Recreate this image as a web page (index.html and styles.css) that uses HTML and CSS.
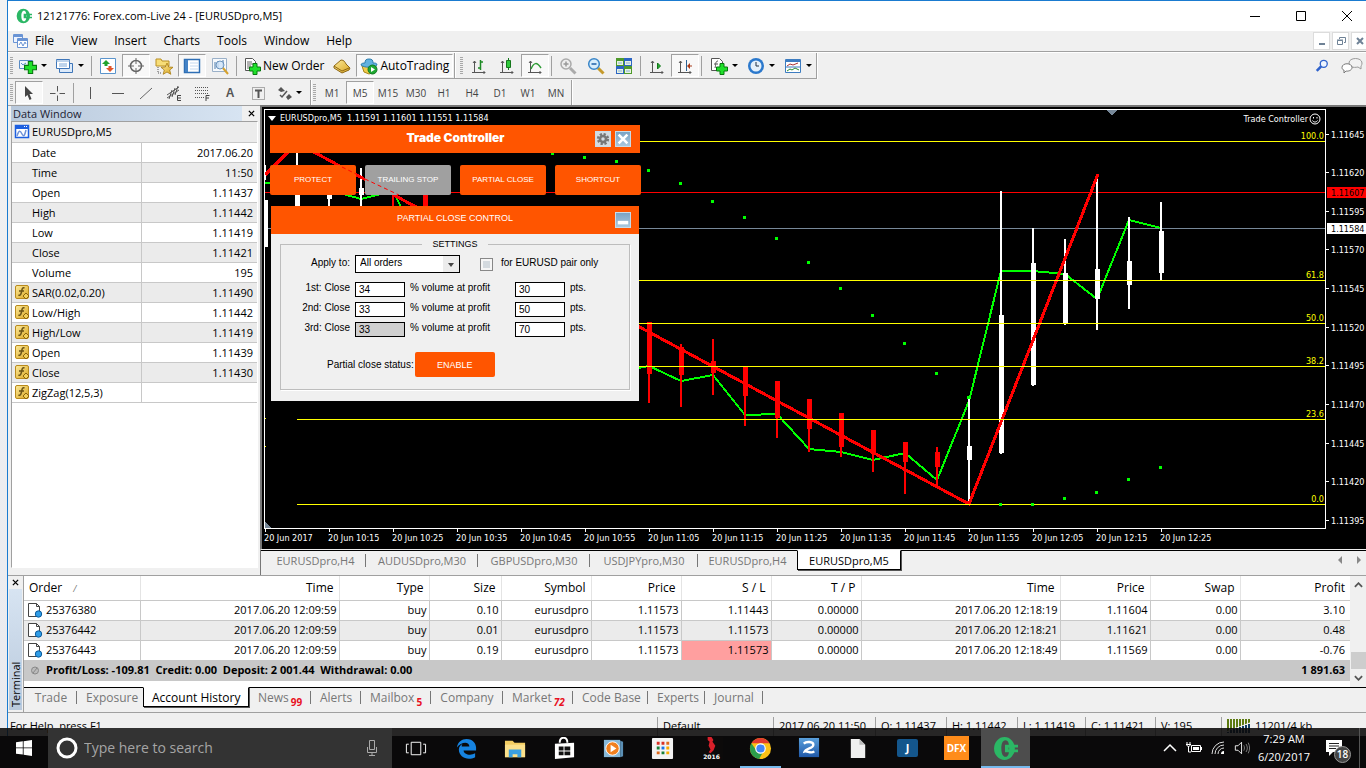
FILE: index.html
```html
<!DOCTYPE html>
<html lang="en">
<head>
<meta charset="utf-8">
<title>12121776: Forex.com-Live 24 - [EURUSDpro,M5]</title>
<link rel="stylesheet" href="styles.css">
</head>
<body>
<svg class="defs" aria-hidden="true">
  <defs>
    <linearGradient id="gold" x1="0" y1="0" x2="1" y2="1"><stop offset="0" stop-color="#fdeb9c"/><stop offset="1" stop-color="#d9a520"/></linearGradient>
    <linearGradient id="sky" x1="0" y1="0" x2="0" y2="1"><stop offset="0" stop-color="#5aa0dc"/><stop offset="1" stop-color="#1f58a8"/></linearGradient>
    <symbol id="plus" viewBox="0 0 12 12"><path d="M4 .5h4V4h3.500v4H8v3.500H4V8H.5V4H4z" fill="#1fe02a" stroke="#07780f"/></symbol>
    <symbol id="fx" viewBox="0 0 16 16"><rect x="1.500" y="1.500" width="13" height="13" rx="1.500" fill="url(#gold)" stroke="#b98a1c"/><path d="M10.500 4C8 3 8 6 7.500 8s-1 4-3 3M5 7h5" stroke="#6b5316" stroke-width="1.500" fill="none"/><path d="M12 9l3 3-3 3-3-3z" fill="#f3cf5b" stroke="#8a6510"/></symbol>
    <symbol id="order" viewBox="0 0 16 16"><path d="M1.500 1.500h8l3 3v10h-11z" fill="#fff" stroke="#444"/><path d="M9.500 1.500v3h3" fill="none" stroke="#444"/><circle cx="11.500" cy="12" r="3.200" fill="#2f9ce6" stroke="#0a5a9c"/></symbol>
    <symbol id="axes" viewBox="0 0 16 16"><path d="M3.500 2v12M1 13.500h13M2 4l1.500-2L5 4M12.500 12l1.500 1.500-1.500 1.500" fill="none" stroke="#555"/></symbol>
    <symbol id="logo" viewBox="0 0 24 24"><path fill-rule="evenodd" d="M11 1a10 11 0 0 1 0 22a10 11 0 0 1 0-22zM12 4c-3 0-4 4-4 8s1 8 4 8 3.500-4 3.500-8S15 4 12 4z" fill="#2bb765"/><path d="M11.500 8.500H24v2.500h-9v2h9v2.500H11.500z" fill="#2bb765"/></symbol>
  </defs>
</svg>

<main class="window">
  <header class="titlebar">
    <svg class="app-icon" viewBox="0 0 24 24"><use href="#logo"/></svg>
    <h1>12121776: Forex.com-Live 24 - [EURUSDpro,M5]</h1>
    <div class="win-controls">
      <button aria-label="Minimize"><svg viewBox="0 0 12 12"><path d="M1 6.500h10" stroke="#000"/></svg></button>
      <button aria-label="Maximize"><svg viewBox="0 0 12 12"><path d="M1.500 1.500h9v9h-9z" stroke="#000" fill="none"/></svg></button>
      <button aria-label="Close"><svg viewBox="0 0 12 12"><path d="M1 1l10 10M11 1L1 11" stroke="#000"/></svg></button>
    </div>
  </header>

  <nav class="menubar">
    <svg class="icon16" viewBox="0 0 16 16"><path d="M1.500 1.500h9v8h-9z" fill="#eef4ff" stroke="#6a94d4"/><path d="M5.500 5.500h10v9h-10z" fill="#fff" stroke="#6a94d4"/><path d="M5 7h11M1 3h10" stroke="#6a94d4" stroke-width="2"/><path d="M7 12l2-3 2 4 2-4 1 2" fill="none" stroke="#6a94d4"/></svg>
    <button>File</button><button>View</button><button>Insert</button><button>Charts</button><button>Tools</button><button>Window</button><button>Help</button>
    <div class="mdi">
      <button aria-label="Minimize chart"><svg viewBox="0 0 12 12"><path d="M3 9h6" stroke="#6f8296" stroke-width="2"/></svg></button>
      <button aria-label="Restore chart"><svg viewBox="0 0 12 12"><path d="M4.500 4V2.500h6v5H9M2.500 5.500h5v4h-5zM2 5h6" stroke="#6f8296" fill="none"/></svg></button>
      <button aria-label="Close chart"><svg viewBox="0 0 12 12"><path d="M3 3l6 6M9 3L3 9" stroke="#6f8296" stroke-width="2"/></svg></button>
    </div>
  </nav>

  <div class="toolrow">
    <div class="toolbar lined">
      <i class="grip"></i>
      <button class="tb drop" aria-label="New chart"><svg viewBox="0 0 20 18"><path d="M1.500 3.500h13v8h-13z" fill="#eef5fd" stroke="#5a8cc4"/><path d="M3 6l2 2 3-2" stroke="#5a8cc4" fill="none"/><use href="#plus" x="6" y="4" width="13" height="13"/></svg></button>
      <button class="tb drop" aria-label="Profiles"><svg viewBox="0 0 20 18"><path d="M4.500 6.500h13v9h-13z" fill="#dceafa" stroke="#3f76b8"/><path d="M1.500 2.500h13v9h-13z" fill="#fff" stroke="#3f76b8"/><path d="M1 4h14M4 7h8M4 9h8" stroke="#7fa9d8"/></svg></button>
      <i class="sep"></i>
      <button class="tb" aria-label="Market watch"><svg viewBox="0 0 18 18"><path d="M1.500 1.500h15v15h-15z" fill="#fff" stroke="#5a94cc"/><path d="M7 3l4 4H8.500v2h-3V7H3z" fill="#22a32b"/><path d="M11 15l4-4h-2.500V9h-3v2H7z" fill="#e2552a"/></svg></button>
      <button class="tb on" aria-label="Navigator"><svg viewBox="0 0 18 18"><circle cx="9" cy="9" r="5.500" fill="none" stroke="#666" stroke-width="1.500"/><path d="M9 1v6M9 11v6M1 9h6M11 9h6" stroke="#666"/></svg></button>
      <button class="tb" aria-label="Favorites"><svg viewBox="0 0 18 18"><path d="M1 2h5l1 2h7v5H1z" fill="#f7dd77" stroke="#b98f22"/><path d="M3 10v6h4" stroke="#555" stroke-dasharray="1 1" fill="none"/><path d="M12 6l1.700 4 4.300.3-3.300 2.700 1.100 4.300L12 15l-3.800 2.300L9.300 13 6 10.300l4.300-.3z" fill="url(#gold)" stroke="#a87c12" stroke-width=".8"/></svg></button>
      <button class="tb on" aria-label="Data window"><svg viewBox="0 0 18 18"><path d="M1.500 2.500h15v13h-15z" fill="#fff" stroke="#2f6fb5" stroke-width="1.500"/><path d="M2 3h3v12H2z" fill="#4583c6"/><path d="M7 6h8M7 9h8M7 12h8" stroke="#c4d9ef"/></svg></button>
      <button class="tb" aria-label="Strategy tester"><svg viewBox="0 0 18 18"><path d="M1.500 1.500h14v13h-14z" fill="#f6f9fc" stroke="#9ab0c8"/><path d="M4 5v7M7 4v7M12 3v8" stroke="#4f7dad"/><circle cx="9" cy="8" r="4" fill="#cfe4f8" fill-opacity=".8" stroke="#6b94bd"/><path d="M12 11l5 6" stroke="#d6a12c" stroke-width="2"/></svg></button>
      <i class="sep"></i>
      <button class="tb wide"><svg viewBox="0 0 18 18"><path d="M2.500 1.500h7l3 3v9h-10z" fill="#fff" stroke="#555"/><path d="M4 5h5M4 7h7M4 9h4M4 11h3" stroke="#666"/><use href="#plus" x="6" y="6" width="12" height="12"/></svg>New Order</button>
      <button class="tb" aria-label="MetaEditor"><svg viewBox="0 0 18 18"><path d="M1 9l7-6c3 0 4 2 5 4l4 4-1 2-7 3-8-5z" fill="url(#gold)" stroke="#8d6714"/><path d="M1 9l8 5 7-3" fill="none" stroke="#8d6714"/></svg></button>
      <button class="tb wide on"><svg viewBox="0 0 18 18"><path d="M2 9h14l-2 6-5 2-5-2z" fill="#f0cb4a" stroke="#a98518"/><path d="M1 8c0-2 3-2 4-2 0-3 1-4 4-4s4 1 4 4c2 0 4 0 4 2-3 3-13 3-16 0z" fill="#62b2e0" stroke="#2f7fae"/><circle cx="12.500" cy="12.500" r="4.500" fill="#1ea832" stroke="#0d7a1d"/><path d="M11 10l4 2.500-4 2.500z" fill="#fff"/></svg>AutoTrading</button>
    </div>
    <div class="toolbar lined charts">
      <i class="grip"></i>
      <button class="tb" aria-label="Bar chart"><svg viewBox="0 0 18 18"><use href="#axes" x="1" y="2" width="16" height="16"/><path d="M10.500 3v10M11 5h2M8 11h2" stroke="#1d8a24" stroke-width="1.500"/></svg></button>
      <button class="tb" aria-label="Candlesticks"><svg viewBox="0 0 18 18"><use href="#axes" x="1" y="2" width="16" height="16"/><path d="M10.500 1v12" stroke="#14761b"/><path d="M8.500 3.500h4v7h-4z" fill="#2fc93a" stroke="#14761b"/></svg></button>
      <button class="tb on" aria-label="Line chart"><svg viewBox="0 0 18 18"><use href="#axes" x="1" y="2" width="16" height="16"/><path d="M5 12c3-7 6-7 10-1" stroke="#2c9a33" stroke-width="1.500" fill="none"/></svg></button>
      <i class="sep"></i>
      <button class="tb" aria-label="Zoom in"><svg viewBox="0 0 18 18"><circle cx="7" cy="7" r="5" fill="#eee" stroke="#aaa" stroke-width="1.500"/><path d="M4.500 7h5M7 4.500v5" stroke="#999" stroke-width="1.500"/><path d="M11 11l5.500 5.500" stroke="#aaa" stroke-width="3"/></svg></button>
      <button class="tb" aria-label="Zoom out"><svg viewBox="0 0 18 18"><path d="M11 11l5.500 5.500" stroke="#c59a2c" stroke-width="3"/><circle cx="7" cy="7" r="5.300" fill="#d8edfc" stroke="#3a86c8" stroke-width="1.500"/><path d="M4.500 7h5" stroke="#1d5fa8" stroke-width="1.500"/></svg></button>
      <button class="tb" aria-label="Tile windows"><svg viewBox="0 0 18 18"><path d="M1 1h8v8H1zM9 9h8v8H9z" fill="#4e9a2b"/><path d="M9 1h8v8H9zM1 9h8v8H1z" fill="#2c65c4"/><path d="M2 4h6v4H2zM10 4h6v4h-6zM2 12h6v4H2zM10 12h6v4h-6z" fill="#e8f3e2"/><path d="M3 6h4M11 6h4M3 14h4M11 14h4" stroke="#8ab0d8"/></svg></button>
      <i class="sep"></i>
      <button class="tb" aria-label="Auto scroll"><svg viewBox="0 0 18 18"><use href="#axes" x="1" y="2" width="16" height="16"/><path d="M9.500 6l3 3-3 3z" fill="#27b032" stroke="#14761b"/></svg></button>
      <button class="tb on" aria-label="Chart shift"><svg viewBox="0 0 18 18"><use href="#axes" x="1" y="2" width="16" height="16"/><path d="M10.500 3v11" stroke="#2a6496"/><path d="M11 9l3-3v2.500h2v1h-2V12z" fill="#a83a1a"/></svg></button>
      <i class="sep"></i>
      <button class="tb drop" aria-label="Indicators"><svg viewBox="0 0 18 18"><path d="M1.500 1.500h8l3 3v9h-11z" fill="#fff" stroke="#555"/><path d="M8 4c-3 0-2 4-3 7M4 7h4" stroke="#555" fill="none"/><use href="#plus" x="6" y="6" width="12" height="12"/></svg></button>
      <button class="tb drop" aria-label="Periods"><svg viewBox="0 0 18 18"><circle cx="9" cy="9" r="8" fill="#2b78cc"/><circle cx="9" cy="9" r="5.500" fill="#e4f0fb"/><path d="M9 5v4h3" stroke="#234" fill="none"/></svg></button>
      <button class="tb drop" aria-label="Templates"><svg viewBox="0 0 18 18"><path d="M1.500 2.500h15v13h-15z" fill="#fff" stroke="#3d7cc0"/><path d="M1 3h16v2H1z" fill="#3d7cc0"/><path d="M3 9l3-2 3 1 5-2" stroke="#a33" fill="none"/><path d="M1 10h16" stroke="#3d7cc0"/><path d="M3 14l3-2 2 1 3-2 4 2" stroke="#2a8d32" fill="none"/></svg></button>
    </div>
    <div class="tool-end">
      <button class="tb" aria-label="Search"><svg viewBox="0 0 16 16"><circle cx="10" cy="5.500" r="4" fill="#eef5ff" stroke="#2f62cc" stroke-width="1.500"/><path d="M7 8.500l-5 5" stroke="#2f62cc" stroke-width="3"/></svg></button>
      <button class="tb" aria-label="Chat"><svg class="wide-icon" viewBox="0 0 22 16"><path d="M8 5c0-6 13-6 13 0 0 2-1 3-1 3v3l-3-2c-5 1-9 0-9-4z" fill="#f2f2f2" stroke="#999"/><path d="M1 9.500c0-5 10-5 10 0 0 3-4 4-6 3.500L3 15v-3c-1 0-2-1-2-2.500z" fill="#fff" stroke="#777"/></svg></button>
    </div>
  </div>

  <div class="toolrow second">
    <div class="toolbar">
      <i class="grip"></i>
      <button class="tb on" aria-label="Cursor"><svg viewBox="0 0 16 16"><path d="M4 1l8 8H8.500l2 5-2 1-2-5L4 12z" fill="#444"/></svg></button>
      <button class="tb" aria-label="Crosshair"><svg viewBox="0 0 16 16"><path d="M8.500 1v5.500M8.500 10.500V16M1 8.500h5.500M10.500 8.500H16" stroke="#555"/></svg></button>
      <i class="sep"></i>
      <button class="tb" aria-label="Vertical line"><svg viewBox="0 0 16 16"><path d="M8.500 2v12" stroke="#555"/></svg></button>
      <button class="tb" aria-label="Horizontal line"><svg viewBox="0 0 16 16"><path d="M2 8.500h12" stroke="#555"/></svg></button>
      <button class="tb" aria-label="Trendline"><svg viewBox="0 0 16 16"><path d="M2 14L14 3" stroke="#666"/></svg></button>
      <button class="tb" aria-label="Equidistant channel"><svg viewBox="0 0 16 16"><path d="M1 10l12-8M1 13l12-8M3 14l3-9M6 12l3-9M9 10l3-9" stroke="#555" fill="none"/><path d="M15 10.500h-3.500v5H15M12 13h3" stroke="#444" fill="none"/></svg></button>
      <button class="tb" aria-label="Fibonacci retracement"><svg viewBox="0 0 16 16"><path d="M1 2.500h14M1 5.500h14M1 8.500h14M1 12.500h9" stroke="#555" stroke-dasharray="1 1"/><path d="M15.500 10.500H12v5.500M12 13h3" stroke="#444" fill="none"/></svg></button>
      <button class="tb text-tool" aria-label="Text">A</button>
      <button class="tb" aria-label="Text label"><svg viewBox="0 0 16 16"><path d="M2.500 2.500h12v12h-12z" fill="none" stroke="#666" stroke-dasharray="1 1"/><path d="M5 5.500h7M8.500 5v8" stroke="#555" stroke-width="2"/></svg></button>
      <button class="tb drop narrow" aria-label="Arrows"><svg viewBox="0 0 16 16"><path d="M4 2l4 4-4 1-3-2zM12 9l3 3-4 3-2-3z" fill="#555"/><path d="M3 10l2 2 5-6" stroke="#555" fill="none" stroke-width="1.500"/></svg></button>
    </div>
    <div class="toolbar periods">
      <i class="grip"></i>
      <button class="tb">M1</button><button class="tb on">M5</button><button class="tb">M15</button><button class="tb">M30</button><button class="tb">H1</button><button class="tb">H4</button><button class="tb">D1</button><button class="tb">W1</button><button class="tb">MN</button>
    </div>
  </div>

  <div class="workspace">
    <aside class="data-window">
      <header><h2>Data Window</h2><button aria-label="Close data window"><svg viewBox="0 0 8 8"><path d="M1 1l6 6M7 1L1 7" stroke="#000" stroke-width="1.500"/></svg></button></header>
      <div class="data-list">
        <table>
          <colgroup><col><col class="c-value"></colgroup>
          <thead><tr><th colspan="2"><span><svg viewBox="0 0 16 16"><path d="M1.500 1.500h13v12h-13z" fill="#fff" stroke="#1d5fe0" stroke-width="1.500"/><path d="M1 1h14v4H1z" fill="#1d5fe0"/><path d="M10 2.500h4" stroke="#fff" stroke-dasharray="1 1"/><path d="M3 12c2-6 3-6 5-2s3 0 4-4" stroke="#6f92d8" fill="none" stroke-width="1.500"/></svg>EURUSDpro,M5</span></th></tr></thead>
          <tbody>
            <tr><td>Date</td><td>2017.06.20</td></tr>
            <tr><td>Time</td><td>11:50</td></tr>
            <tr><td>Open</td><td>1.11437</td></tr>
            <tr><td>High</td><td>1.11442</td></tr>
            <tr><td>Low</td><td>1.11419</td></tr>
            <tr><td>Close</td><td>1.11421</td></tr>
            <tr><td>Volume</td><td>195</td></tr>
            <tr><td class="ind"><span><svg><use href="#fx"/></svg>SAR(0.02,0.20)</span></td><td>1.11490</td></tr>
            <tr><td class="ind"><span><svg><use href="#fx"/></svg>Low/High</span></td><td>1.11442</td></tr>
            <tr><td class="ind"><span><svg><use href="#fx"/></svg>High/Low</span></td><td>1.11419</td></tr>
            <tr><td class="ind"><span><svg><use href="#fx"/></svg>Open</span></td><td>1.11439</td></tr>
            <tr><td class="ind"><span><svg><use href="#fx"/></svg>Close</span></td><td>1.11430</td></tr>
            <tr><td class="ind"><span><svg><use href="#fx"/></svg>ZigZag(12,5,3)</span></td><td></td></tr>
          </tbody>
        </table>
      </div>
    </aside>

    <section class="chart-area">
      <div class="chart">
        <div class="plot">
          <svg class="fill">
            <g transform="translate(-265,-110)" shape-rendering="crispEdges">
              <path d="M265 192.500H4000" stroke="#ff0000"/>
              <path d="M265 228.500H4000" stroke="#778899"/>
              <polyline fill="none" stroke="#00ff00" stroke-width="2" points="265,183 329,190 361,199 393,191 425,255 617,372 649,366 681,381 713,375 745,415 777,414 809,449 841,452 873,460 905,453 937,480 969,401 1001,271 1033,271 1065,274 1097,299 1129,220 1161,228"/>
              <path stroke="#ff0000" stroke-width="2" d="M393 193v25M425 180v60M649 322v81M681 344v63M713 339v56M745 367v59M777 381v57M809 399v53M841 413v44M873 430v42M905 442v52M937 447v39"/>
              <path stroke="#ff0000" stroke-width="5" d="M425.500 194v20M649.500 322v52M681.500 347v28M713.500 361v12M745.500 367v29M777.500 381v37M809.500 399v30M841.500 413v34M873.500 430v24M905.500 442v20M937.500 452v15"/>
              <path stroke="#ffffff" stroke-width="2" d="M265 165v15M297 152v60M329 194v12M361 168v38M969 398v105M1001 191v263M1033 228v158M1065 239v86M1097 179v151M1129 217v92M1161 202v78"/>
              <path stroke="#ffffff" stroke-width="5" d="M265.500 200v47M297.500 194v14M329.500 193v6M361.500 188v7M969.500 446v14M1001.500 315v138M1033.500 263v122M1065.500 273v51M1097.500 269v30M1129.500 261v24M1161.500 231v42"/>
              <polyline fill="none" stroke="#ff0000" stroke-width="3" points="265,175 297,143 969,504 1098,174"/>
              <path stroke="#ffff00" d="M297 141.500H4000M297 280.500H4000M297 323.500H4000M297 366.500H4000M297 419.500H4000M297 504.500H4000M264 418.500h2M264 446.500h2"/>
              <path stroke="#00ff00" stroke-width="3" d="M551 153.500h3M583 157.500h3M615 161.500h3M647 170.500h3M679 183.500h3M711 201.500h3M743 217.500h3M775 238.500h3M807 262.500h3M839 288.500h3M871 315.500h3M903 343.500h3M935 373.500h3M967 397.500h3M999 504.500h3M1031 504.500h3M1063 498.500h3M1095 492.500h3M1127 479.500h3M1159 467.500h3"/>
              <path d="M1106 110h11l-5 5z" fill="#778899"/>
              <path d="M265 522l6 6h-6z" fill="#778899"/>
            </g>
          </svg>
          <p class="symbol"><svg viewBox="0 0 8 5"><path d="M0 0h8L4 5z" fill="#fff"/></svg>EURUSDpro,M5&nbsp; 1.11591 1.11601 1.11551 1.11584</p>
          <p class="expert">Trade Controller<svg viewBox="0 0 12 12"><circle cx="6" cy="6" r="5" fill="none" stroke="#fff"/><path d="M4 4h1v1.500H4zM7.500 4h1v1.500h-1z" fill="#fff"/><path d="M3.500 7.500c1 2 4 2 5 0" stroke="#fff" fill="none"/></svg></p>
          <svg class="fill levels">
            <svg x="100%" overflow="visible"><g transform="translate(-1325,-110)" text-anchor="end" fill="#ffff00">
              <text x="1324" y="139">100.0</text><text x="1324" y="278">61.8</text><text x="1324" y="321">50.0</text><text x="1324" y="364">38.2</text><text x="1324" y="417">23.6</text><text x="1324" y="502">0.0</text>
            </g></svg>
          </svg>

          <section class="trade">
            <header class="trade-head"><h2>Trade Controller</h2>
              <button class="sq gear" aria-label="Settings"><svg viewBox="0 0 16 16"><circle cx="8" cy="8" r="5.500" fill="none" stroke="#777" stroke-width="3" stroke-dasharray="2.500 1.820"/><circle cx="8" cy="8" r="3.500" fill="none" stroke="#777" stroke-width="3"/></svg></button>
              <button class="sq" aria-label="Close panel"><svg viewBox="0 0 16 16"><path d="M3 3l10 10M13 3L3 13" stroke="#fff" stroke-width="3"/></svg></button>
            </header>
            <div class="trade-tabs">
              <button>PROTECT</button><button class="off">TRAILING STOP</button><button>PARTIAL CLOSE</button><button>SHORTCUT</button>
              <svg class="guide" viewBox="0 0 130 30"><path d="M72 2L86 9M95 14L129 30" stroke="#ff0000" stroke-dasharray="4 3"/></svg>
            </div>
            <form class="control">
              <header><h3>PARTIAL CLOSE CONTROL</h3><button type="button" class="sq" aria-label="Collapse"><svg viewBox="0 0 16 16"><path d="M2 9h12v4H2z" fill="#fff"/></svg></button></header>
              <fieldset>
                <legend>SETTINGS</legend>
                <div class="line apply">
                  <label for="apply">Apply to:</label>
                  <span class="select"><select id="apply"><option>All orders</option></select></span>
                  <input type="checkbox" id="pair"><label for="pair">for EURUSD pair only</label>
                </div>
                <div class="line"><label for="v1">1st: Close</label><input id="v1" value="34"><label for="p1">% volume at profit</label><input id="p1" value="30"><span>pts.</span></div>
                <div class="line"><label for="v2">2nd: Close</label><input id="v2" value="33"><label for="p2">% volume at profit</label><input id="p2" value="50"><span>pts.</span></div>
                <div class="line"><label for="v3">3rd: Close</label><input id="v3" class="ro" value="33" readonly><label for="p3">% volume at profit</label><input id="p3" value="70"><span>pts.</span></div>
                <div class="status-line"><span>Partial close status:</span><button type="button">ENABLE</button></div>
              </fieldset>
            </form>
          </section>
        </div>
        <svg class="price-axis">
          <g transform="translate(-1326,-109)">
            <path d="M1326 134.500h3M1326 172.500h3M1326 211.500h3M1326 249.500h3M1326 288.500h3M1326 327.500h3M1326 365.500h3M1326 404.500h3M1326 443.500h3M1326 481.500h3M1326 520.500h3" stroke="#fff"/>
            <g fill="#fff"><text x="1331" y="138">1.11645</text><text x="1331" y="176">1.11620</text><text x="1331" y="215">1.11595</text><text x="1331" y="253">1.11570</text><text x="1331" y="292">1.11545</text><text x="1331" y="331">1.11520</text><text x="1331" y="369">1.11495</text><text x="1331" y="408">1.11470</text><text x="1331" y="447">1.11445</text><text x="1331" y="485">1.11420</text><text x="1331" y="524">1.11395</text></g>
            <path d="M1327 187h50v11h-50z" fill="#ff0000"/><text x="1331" y="196">1.11607</text>
            <path d="M1327 223h50v11h-50z" fill="#fff"/><text x="1331" y="232">1.11584</text>
          </g>
        </svg>
        <svg class="time-axis">
          <g transform="translate(-264,-529)">
            <path d="M265.500 529v3M329.500 529v3M393.500 529v3M457.500 529v3M521.500 529v3M585.500 529v3M649.500 529v3M713.500 529v3M777.500 529v3M841.500 529v3M905.500 529v3M969.500 529v3M1033.500 529v3M1097.500 529v3M1161.500 529v3" stroke="#fff"/>
            <g fill="#fff"><text x="264" y="541">20 Jun 2017</text><text x="328" y="541">20 Jun 10:15</text><text x="392" y="541">20 Jun 10:25</text><text x="456" y="541">20 Jun 10:35</text><text x="520" y="541">20 Jun 10:45</text><text x="584" y="541">20 Jun 10:55</text><text x="648" y="541">20 Jun 11:05</text><text x="712" y="541">20 Jun 11:15</text><text x="776" y="541">20 Jun 11:25</text><text x="840" y="541">20 Jun 11:35</text><text x="904" y="541">20 Jun 11:45</text><text x="968" y="541">20 Jun 11:55</text><text x="1032" y="541">20 Jun 12:05</text><text x="1096" y="541">20 Jun 12:15</text><text x="1160" y="541">20 Jun 12:25</text></g>
          </g>
        </svg>
      </div>
      <nav class="tabs chart-tabs">
        <button>EURUSDpro,H4</button><button>AUDUSDpro,M30</button><button>GBPUSDpro,M30</button><button>USDJPYpro,M30</button><button class="last">EURUSDpro,H4</button><button class="active">EURUSDpro,M5</button>
        <svg class="scroll-arrows" viewBox="0 0 24 8"><path d="M4 0v8L0 4zM19 0v8l4-4z" fill="#888"/></svg>
      </nav>
    </section>
  </div>

  <section class="terminal">
    <aside><button aria-label="Close terminal"><svg viewBox="0 0 8 8"><path d="M1 1l6 6M7 1L1 7" stroke="#000" stroke-width="1.500"/></svg></button><h2>Terminal</h2></aside>
    <div class="terminal-main">
      <div class="history">
        <table>
          <colgroup><col class="c-order"><col class="c-time"><col class="c-std"><col class="c-size"><col class="c-std"><col class="c-std"><col class="c-std"><col class="c-std"><col class="c-time"><col class="c-std"><col class="c-std"><col class="c-profit"></colgroup>
          <thead><tr><th>Order <i>/</i></th><th>Time</th><th>Type</th><th>Size</th><th>Symbol</th><th>Price</th><th>S / L</th><th>T / P</th><th>Time</th><th>Price</th><th>Swap</th><th>Profit</th></tr></thead>
          <tbody>
            <tr><td><span><svg><use href="#order"/></svg>25376380</span></td><td>2017.06.20 12:09:59</td><td>buy</td><td>0.10</td><td>eurusdpro</td><td>1.11573</td><td>1.11443</td><td>0.00000</td><td>2017.06.20 12:18:19</td><td>1.11604</td><td>0.00</td><td>3.10</td></tr>
            <tr><td><span><svg><use href="#order"/></svg>25376442</span></td><td>2017.06.20 12:09:59</td><td>buy</td><td>0.01</td><td>eurusdpro</td><td>1.11573</td><td>1.11573</td><td>0.00000</td><td>2017.06.20 12:18:21</td><td>1.11621</td><td>0.00</td><td>0.48</td></tr>
            <tr><td><span><svg><use href="#order"/></svg>25376443</span></td><td>2017.06.20 12:09:59</td><td>buy</td><td>0.19</td><td>eurusdpro</td><td>1.11573</td><td class="hit">1.11573</td><td>0.00000</td><td>2017.06.20 12:18:49</td><td>1.11569</td><td>0.00</td><td>-0.76</td></tr>
          </tbody>
          <tfoot><tr><td colspan="10"><span><svg viewBox="0 0 16 16"><circle cx="8" cy="8.500" r="3.500" fill="#bbb" stroke="#888"/><path d="M6 11l4-5" stroke="#888"/></svg>Profit/Loss: -109.81&nbsp; Credit: 0.00&nbsp; Deposit: 2 001.44&nbsp; Withdrawal: 0.00</span></td><td colspan="2">1 891.63</td></tr></tfoot>
        </table>
        <div class="scrollbar"><svg viewBox="0 0 10 6"><path d="M1 5l4-4 4 4" stroke="#555" stroke-width="2" fill="none"/></svg><i></i><svg viewBox="0 0 10 6"><path d="M1 1l4 4 4-4" stroke="#555" stroke-width="2" fill="none"/></svg></div>
      </div>
      <nav class="tabs term-tabs">
        <button>Trade</button><button class="last">Exposure</button><button class="active">Account History</button><button>News<sub>99</sub></button><button>Alerts</button><button>Mailbox<sub>5</sub></button><button>Company</button><button>Market<sub class="slant">72</sub></button><button>Code Base</button><button>Experts</button><button>Journal</button>
      </nav>
    </div>
  </section>

  <footer class="statusbar">
    <span>For Help, press F1</span><span>Default</span><span>2017.06.20 11:50</span><span>O: 1.11437</span><span>H: 1.11442</span><span>L: 1.11419</span><span>C: 1.11421</span><span>V: 195</span>
    <span class="traffic"><svg viewBox="0 0 24 14"><path d="M0 7h24" stroke="#5c7a10" stroke-width="14" stroke-dasharray="2 1"/><path d="M0 12L24 3v11H0z" fill="#f0f0f0"/><path d="M1 14v-1M4 14v-3M7 14v-4M10 14V9M13 14V8M16 14V7M19 14V6M22 14V5" stroke="#123f66" stroke-width="2"/></svg>11201/4 kb</span>
  </footer>
</main>

<footer class="taskbar">
  <button class="start" aria-label="Start"><svg viewBox="0 0 16 16"><path d="M0 2.300l6.800-1v6.200H0zM7.600 1.200L16 0v7.500H7.600zM0 8.300h6.800v6.300L0 13.700zM7.600 8.300H16V16l-8.400-1.200z" fill="#fff"/></svg></button>
  <div class="search"><svg class="ring" viewBox="0 0 22 22"><circle cx="11" cy="11" r="9" fill="none" stroke="#fff" stroke-width="3"/></svg><input aria-label="Search" placeholder="Type here to search"><svg class="mic" viewBox="0 0 12 18"><path d="M3.500 1.500h5v9h-5z" fill="none" stroke="#aaa"/><path d="M1.500 8v5.500h9V8M6 13.500V17M3 16.500h6" fill="none" stroke="#aaa"/></svg></div>
  <div class="apps">
    <button class="first" aria-label="Task view"><svg viewBox="0 0 24 24"><path d="M7.500 5.500h10v13h-10zM5 7.500H2.500v9H5M20 7.500h2.500v9H20" fill="none" stroke="#fff"/></svg></button>
    <button aria-label="Edge"><svg viewBox="0 0 24 24"><path d="M2 11C3 5 7 2 12 2c7 0 10 5 10 9v3H9c0 4 7 6 12 3v4c-8 4-17 0-17-8 0-3 2-5 4-6-1 1-1 2-1 3h8c0-6-9-5-13 1z" fill="#1683e0"/></svg></button>
    <button aria-label="File Explorer"><svg viewBox="0 0 24 24"><path d="M1 4h8l2 2h11v15H1z" fill="#f3cd62"/><path d="M1 8h21v13H1z" fill="#fbe08b"/><path d="M5 13h13v8h-4v-3H9v3H5z" fill="#3a9fe0"/></svg></button>
    <button aria-label="Store"><svg viewBox="0 0 24 24"><path d="M2 7l20-1v15L2 23z" fill="#fff"/><path d="M7 6c0-7 8-7 8 0" stroke="#fff" stroke-width="2" fill="none"/><path d="M6 10h5v4H6zM12 10h6v4h-6zM6 15h5v4H6zM12 15h6v4h-6z" fill="#111"/></svg></button>
    <button aria-label="Media player"><svg viewBox="0 0 24 24"><path d="M2 3h17v18H2z" fill="#87b8d8"/><path d="M19 4l3 1v15l-3 1z" fill="#5b8fb5"/><circle cx="11" cy="12" r="7" fill="#f08020" stroke="#fff"/><path d="M9 8l6 4-6 4z" fill="#fff"/></svg></button>
    <button aria-label="Apps grid"><svg viewBox="0 0 24 24"><rect x="1" y="1" width="22" height="22" rx="1" fill="#f3f3f3"/><path d="M6 5h3v3H6zM11 5h3v3h-3z" fill="#d93025"/><path d="M16 5h3v3h-3zM6 15h3v3H6z" fill="#e06a1c"/><path d="M6 10h3v3H6zM11 15h3v3h-3z" fill="#188038"/><path d="M11 10h3v3h-3z" fill="#1a73e8"/><path d="M16 10h3v3h-3zM16 15h3v3h-3z" fill="#f9ab00"/></svg></button>
    <button class="cap" aria-label="Game 2016"><svg viewBox="0 0 24 24"><path d="M0 0h24v24H0z" fill="#0c0a0a"/><path d="M8 0h4l2 3-1 2 3 4-2 5-3 3-2-1 2-3-2-4 1-4-2-2z" fill="#d8202a"/></svg><b>2016</b></button>
    <button class="running" aria-label="Chrome"><svg viewBox="0 0 24 24"><circle cx="12" cy="12" r="11" fill="#fbc116"/><path d="M2.500 6.500A11 11 0 0 1 21.500 6.500H12z" fill="#e33b2e"/><path d="M2.500 6.500a11 11 0 0 0 8 16.400L15 15l-6 1z" fill="#2c9e4b"/><circle cx="12" cy="12" r="5.500" fill="#fff"/><circle cx="12" cy="12" r="4.300" fill="#4285f4"/></svg></button>
    <button aria-label="Z"><svg viewBox="0 0 24 24"><path d="M1 1h21v20H1z" fill="url(#sky)"/><path d="M6 7c3-3 10-2 10 1 0 4-8 4-9 7 3-1 6 3 10 0" stroke="#fff" stroke-width="2.500" fill="none"/></svg></button>
    <button aria-label="Document"><svg viewBox="0 0 24 24"><path d="M4 2h9l6 6v14H4z" fill="#f0f0f0"/><path d="M13 2v6h6z" fill="#bbb"/></svg></button>
    <button class="tile blue">J</button>
    <button class="tile orange">DFX</button>
    <button class="running current" aria-label="Forex.com"><svg viewBox="0 0 24 24"><use href="#logo"/></svg></button>
  </div>
  <div class="tray">
    <svg viewBox="0 0 16 16"><path d="M2 11l6-6 6 6" stroke="#fff" fill="none" stroke-width="1.500"/></svg>
    <svg viewBox="0 0 16 16"><path d="M5.500 5.500h9v6h-9z" fill="none" stroke="#fff"/><path d="M7 7h6v3H7zM15 7h1v3h-1z" fill="#fff"/><path d="M1 2v3c0 2 3 2 3 0V2M0 4.500h5M2.500 6v6H5" stroke="#fff" fill="none"/></svg>
    <svg viewBox="0 0 16 16"><path d="M2 14A12 12 0 0 1 14 2M5 14a9 9 0 0 1 9-9M8 14a6 6 0 0 1 6-6" fill="none" stroke="#ddd"/><path d="M11 14a3 3 0 0 1 3-3v3z" fill="#fff"/></svg>
    <svg viewBox="0 0 18 16"><path d="M1.500 5.500h3l4-4v13l-4-4h-3z" fill="none" stroke="#fff"/><path d="M11 5c1 2 1 4 0 6M13.500 3.500c2 3 2 6 0 9M16 2c2 4 2 8 0 12" fill="none" stroke="#888"/></svg>
    <p>7:29 AM<br>6/20/2017</p>
    <button class="notes" aria-label="Notifications"><svg viewBox="0 0 18 18"><path d="M1 1h16v12H8l-4 4v-4H1z" fill="#fff"/><path d="M4 4.500h10M4 7h10M4 9.500h7" stroke="#222"/></svg><b>18</b></button>
    <i class="peek"></i>
  </div>
</footer>
</body>
</html>
```
FILE: styles.css
```css
* { box-sizing: border-box; }
:root {
  --ui: "Open Sans", "Noto Sans", sans-serif;
  --chart: "DejaVu Sans Condensed", "Noto Sans", sans-serif;
  --face: #f0f0f0;
  --edge: #a0a0a0;
  --orange: #ff5500;
}
body {
  margin: 0;
  height: 100vh;
  overflow: hidden;
  position: relative;
  background: linear-gradient(#f2f2f2, #e9eaef) 0 0 / 7px calc(100% - 32px) no-repeat, #0c0d10;
  padding: 0 0 32px 7px;
  font: 11px/20px var(--ui);
  color: #000;
}
h1, h2, h3, p { margin: 0; font: inherit; }
button, input, select { font: inherit; color: inherit; border: 0; padding: 0; margin: 0; background: none; border-radius: 0; }
svg { display: block; flex: none; }
table { border-collapse: collapse; border-spacing: 0; }
.defs { position: absolute; width: 0; height: 0; }

.window {
  height: 100%;
  display: flex;
  flex-direction: column;
  background: var(--face);
  border: solid #1a7bd0;
  border-width: 1px 0 0 1px;
}
.titlebar { display: flex; align-items: center; height: 30px; background: #fff; padding-left: 8px; gap: 5px; }
.titlebar h1 { flex: 1; white-space: nowrap; }
.app-icon { width: 16px; height: 16px; }
.win-controls { display: flex; margin-right: -4px; }
.win-controls button { width: 46px; height: 28px; display: grid; place-items: center; }
.win-controls svg { width: 12px; height: 12px; }

.menubar { display: flex; align-items: center; height: 21px; padding-left: 4px; gap: 17px; border-bottom: 1px solid var(--edge); font-size: 12px; }
.icon16 { width: 16px; height: 16px; margin-right: -10px; }
.mdi { margin-left: auto; display: flex; gap: 2px; margin-right: -2px; }
.mdi button { width: 17px; height: 18px; background: #fff; border: 1px solid #dcdcdc; display: grid; place-items: center; }
.mdi svg { width: 12px; height: 12px; }

.toolrow { display: flex; height: 27px; border-top: 1px solid #fff; }
.toolrow.second { height: 26px; padding-top: 1px; border-top: 0; }
.toolbar { display: flex; align-items: center; padding-right: 1px; border-right: 1px solid var(--edge); box-shadow: 1px 0 #fff; }
.toolbar.charts { padding-left: 3px; }
.lined { border-bottom: 1px solid var(--edge); }
.grip { width: 3px; height: 18px; margin: 0 2px; background: repeating-linear-gradient(#a8a8a8 0 1px, transparent 1px 2px); }
.sep { width: 1px; height: 20px; background: var(--edge); margin: 0 2px; }
.tb { width: 28px; height: 23px; display: flex; align-items: center; justify-content: center; border: 1px solid transparent; }
.tb svg { width: 18px; height: 18px; }
.tb.on { background: #f8f8f8; border-color: var(--edge) #fff #fff var(--edge); }
.tb.drop { width: 37px; justify-content: flex-start; gap: 3px; padding-left: 2px; }
.toolbar .drop svg { width: 20px; }
.charts .tb.drop { padding-left: 4px; }
.tb.drop::after { content: ""; border: solid transparent; border-width: 3px 3px 0; border-top-color: #000; }
.tb.drop.narrow { padding-left: 4px; }
.second .tb svg { width: 16px; height: 16px; }
.tb.wide { width: auto; padding: 0 3px; gap: 2px; font-size: 12px; }
.tool-end { margin-left: auto; display: flex; gap: 2px; align-items: center; }
.tool-end svg { width: 14px; height: 14px; }
.tool-end .wide-icon { width: 22px; height: 16px; }
.text-tool { font: bold 12px "Liberation Sans", sans-serif; color: #555; }
.periods .tb { font-size: 10px; color: #444; }

.workspace { flex: 1; min-height: 0; display: flex; }
.data-window { width: 252px; display: flex; flex-direction: column; padding: 0 2px 7px 3px; border-top: 1px solid var(--edge); }
.data-window header { display: flex; align-items: center; height: 15px; line-height: 15px; gap: 2px; }
.data-window h2 { flex: 1; background: linear-gradient(90deg, #b9c9dc, #d7e4f2); color: #223; padding-left: 2px; }
.data-window header button { width: 14px; display: grid; place-items: center; }
.data-window header svg { width: 7px; height: 7px; }
.data-list { flex: 1; background: #fff; border: 1px solid var(--edge); border-right-color: #fff; border-bottom-color: #fff; }
.data-list table { width: 100%; table-layout: fixed; }
.c-value { width: 115px; }
.data-list tr { height: 20px; }
.data-list th, .data-list td { font-weight: 400; text-align: left; padding: 0 4px 0 20px; line-height: 19px; border-bottom: 1px solid #c8c8c8; }
.data-list th { background: #ececec; padding-left: 2px; }
.data-list td + td { text-align: right; border-left: 1px solid #c8c8c8; }
.data-list tbody tr:nth-child(even) { background: #ebebeb; }
.data-list .ind { padding-left: 2px; }
.data-list span, .history span { display: flex; align-items: center; gap: 2px; }
.data-list svg { width: 16px; height: 16px; }

.chart-area { flex: 1; min-width: 0; display: flex; flex-direction: column; }
.chart {
  flex: 1;
  min-height: 0;
  display: grid;
  grid-template: minmax(0, 1fr) 20px / minmax(0, 1fr) 40px;
  background: #000;
  border: solid #777;
  border-width: 2px 0 0 2px;
  padding: 2px 0 0 2px;
  font: 9px/12px var(--chart);
}
.plot { position: relative; border: 1px solid #fff; overflow: hidden; color: #fff; }
.fill { position: absolute; inset: 0; width: 100%; height: 100%; }
.levels { pointer-events: none; }
.price-axis, .time-axis { width: 100%; height: 100%; }
.time-axis { grid-column: 1 / 3; }
.symbol, .expert { position: absolute; top: 2px; left: 3px; display: flex; align-items: center; gap: 4px; white-space: nowrap; }
.symbol svg { width: 8px; height: 5px; }
.expert { left: auto; right: 4px; gap: 1px; top: 3px; }
.expert svg { width: 12px; height: 12px; }

.trade { position: absolute; left: 5px; top: 15px; width: 371px; font: 9px/12px "Liberation Sans", sans-serif; color: #fff; }
.trade-head { display: flex; align-items: center; gap: 4px; height: 28px; background: var(--orange); padding-right: 9px; margin-right: 1px; }
.trade-head h2 { flex: 1; text-align: center; font: 900 12px/24px Inter, sans-serif; padding: 0 0 2px 50px; }
.sq { width: 16px; height: 16px; background: linear-gradient(#7ba3c4, #a9c8de); border: 1px solid #c9dbe8; }
.sq.gear { background: #d4dbe0; }
.sq svg { width: 14px; height: 14px; }
.trade-tabs { position: relative; display: grid; grid-template-columns: repeat(4, 1fr); gap: 9px; margin: 12px 0 11px; }
.trade-tabs button { height: 30px; background: var(--orange); border-radius: 2px; font-size: 8px; white-space: nowrap; }
.trade-tabs .off { background: #a0a0a0; }
.guide { position: absolute; left: 0; top: 0; width: 130px; height: 30px; pointer-events: none; }
.control { margin: 0 2px 0 1px; background: var(--face); padding-bottom: 11px; color: #000; font-size: 10px; }
.control header { display: flex; align-items: center; height: 28px; padding: 0 8px 0 24px; background: var(--orange); color: #fff; }
.control h3 { flex: 1; text-align: center; font-size: 9px; line-height: 24px; padding-bottom: 4px; }
.control fieldset { margin: 4px 9px 0; padding: 3px 0 12px; border: 1px solid #bdbdbd; box-shadow: 1px 1px #fff; }
.control legend { margin: 0 auto; padding: 0 10px; font-size: 9px; line-height: 12px; }
.line { display: grid; grid-template-columns: 69px 50px 100px 50px 1fr; column-gap: 5px; height: 20px; align-items: center; line-height: 14px; }
.line > :first-child { text-align: right; }
.line label, .line > span:last-child { padding-bottom: 2px; }
.line input:not([type]) { width: 50px; height: 15px; border: 1px solid #000; background: #fff; padding: 0 3px; min-width: 0; }
.line input.ro:not([type]) { background: #d0d0d0; }
.line.apply { grid-template-columns: 69px 105px 28px 1fr; height: 22px; margin-bottom: 4px; }
.apply input { justify-self: end; width: 13px; height: 13px; margin: 0; appearance: none; background: #d4dadf; border: 1px solid #888; box-shadow: inset 0 0 0 2px #f6f6f6; }
.apply input + label { padding-left: 3px; }
.select { position: relative; display: block; height: 18px; border: 1px solid #000; background: #fff; }
.select select { display: block; width: 100%; height: 14px; appearance: none; padding-left: 4px; }
.select::after { content: ""; position: absolute; right: 0; top: 0; bottom: 0; width: 16px; background: #ececec; }
.select::before { content: ""; position: absolute; z-index: 1; right: 5px; top: 7px; border: solid transparent; border-width: 4px 3px 0; border-top-color: #444; }
.status-line { display: flex; align-items: center; gap: 1px; padding: 13px 0 0 46px; }
.status-line button { width: 80px; height: 25px; background: var(--orange); color: #fff; border-radius: 2px; font-size: 9px; }

.tabs { display: flex; color: #777; font-size: 12px; line-height: 19px; box-shadow: inset 0 1px #000; }
.tabs button { position: relative; flex: none; white-space: nowrap; padding: 0 9px; height: 20px; }
.tabs button::after { content: ""; position: absolute; right: 0; top: 4px; height: 13px; width: 1px; background: #777; }
.tabs .last::after, .tabs .active::after { display: none; }
.tabs .active { background: #fff; color: #000; border: 1px solid #000; border-top-color: #fff; box-shadow: 1px 1px #555; padding: 0 8px; }
.chart-tabs { height: 26px; border-top: 1px solid #eee; padding-left: 4px; background: var(--face); border-left: 1px solid #777; font-size: 11px; }
.chart-tabs button { width: 112px; }
.chart-tabs button:nth-child(1) { width: 101px; }
.chart-tabs button:nth-child(4) { width: 108px; }
.chart-tabs .last { width: 99px; }
.chart-tabs .active { width: 104px; }
.scroll-arrows { width: 24px; height: 8px; margin: 6px 4px 0 auto; }

.terminal { display: flex; height: 137px; border-top: 1px solid var(--edge); }
.terminal aside { width: 15px; padding: 0 1px; display: flex; flex-direction: column; }
.terminal aside button { height: 13px; display: grid; place-items: center; }
.terminal aside svg { width: 7px; height: 7px; }
.terminal aside h2 { height: 121px; writing-mode: vertical-rl; transform: rotate(180deg); line-height: 13px; padding-top: 3px; background: linear-gradient(#b9c9dc, #d7e4f2); }
.terminal-main { flex: 1; min-width: 0; border-left: 1px solid var(--edge); }
.history { display: flex; height: 111px; background: #fff; align-items: flex-start; }
.history table { flex: 1; table-layout: fixed; }
.c-order { width: 116px; } .c-time { width: 199px; } .c-std { width: 90px; } .c-size { width: 72px; } .c-profit { width: 110px; }
.history th, .history td { padding: 0 2px 0 3px; text-align: right; line-height: 19px; font-weight: 400; border-right: 1px solid #c8c8c8; border-bottom: 1px solid #c8c8c8; white-space: nowrap; }
.history thead tr { height: 24px; }
.history tbody tr, .history tfoot tr { height: 20px; }
.history th { padding: 0 5px; border-right-color: #e4e4e4; font-size: 12px; }
.history tbody td { line-height: 18px; padding-bottom: 1px; }
.history th:first-child, .history td:first-child { text-align: left; }
.history th i { margin-left: 8px; font-size: 9px; color: #777; }
.history tbody tr:nth-child(even) { background: #ebebeb; }
.history .hit { background: #ff9f9f; }
.history tfoot td { background: #c8c8c8; font-weight: 700; border: 0; line-height: 18px; padding-bottom: 2px; }
.history td svg { width: 16px; height: 16px; }
.history td:first-child span { gap: 3px; }
.history tr > :last-child { border-right: 0; padding-right: 5px; }
.scrollbar { width: 16px; height: 111px; background: var(--face); display: flex; flex-direction: column; align-items: center; padding: 6px 0; }
.scrollbar i { margin-top: auto; margin-bottom: 6px; width: 15px; height: 17px; background: #cdcdcd; }
.scrollbar svg { width: 9px; height: 6px; }
.term-tabs { padding-left: 1px; }
.term-tabs button { width: 70px; }
.term-tabs sub { color: #e81123; font: bold 10px/10px var(--ui); vertical-align: -4px; margin-left: 2px; }
.term-tabs .slant { font-style: italic; }
.term-tabs button:nth-child(1) { width: 52px; }
.term-tabs button:nth-child(2) { width: 66px; }
.term-tabs button:nth-child(3) { width: 106px; }
.term-tabs button:nth-child(4) { width: 62px; }
.term-tabs button:nth-child(5) { width: 50px; }
.term-tabs button:nth-child(7) { width: 72px; }
.term-tabs button:nth-child(9) { width: 75px; }
.term-tabs button:nth-child(10) { width: 57px; }
.term-tabs button:nth-child(11) { width: 58px; }

.statusbar { height: 24px; border-top: 1px solid var(--edge); display: grid; grid-template-columns: 1fr 116px 102px 71px 71px 68px 70px 66px 145px; padding: 4px 0 0 2px; line-height: 18px; white-space: nowrap; }
.statusbar span + span { border-left: 1px solid var(--edge); padding-left: 5px; }
.traffic { display: flex; gap: 4px; }
.traffic svg { width: 24px; height: 14px; margin-top: 2px; }

.taskbar { position: absolute; left: 0; right: 0; bottom: 0; height: 40px; display: flex; isolation: isolate; background: rgba(10, 9, 9, .88); color: #fff; }
.start { width: 48px; display: grid; place-items: center; }
.start svg { width: 16px; height: 16px; }
.search { width: 344px; background: #333; display: flex; align-items: center; padding: 0 14px 0 8px; gap: 6px; }
.ring { width: 22px; height: 22px; }
.search input { flex: 1; min-width: 0; font-size: 14px; outline: 0; }
.search input::placeholder { color: #a5a5a5; opacity: 1; }
.mic { width: 12px; height: 18px; }
.apps { display: flex; }
.apps button { position: relative; width: 49px; display: grid; place-items: center; }
.apps .first { width: 50px; padding-right: 4px; }
.apps svg { width: 23px; height: 23px; }
.running::after { content: ""; position: absolute; left: 4px; right: 4px; bottom: 0; height: 2px; background: #76b9ed; }
.apps .current { background: #4d4d4d; }
.apps .current svg { width: 25px; height: 25px; }
.current::after { left: 0; right: 0; }
.cap b { position: absolute; bottom: 7px; font: bold 6px/8px "DejaVu Sans", sans-serif; }
.tile::before { content: ""; position: absolute; inset: 11px 14px; background: #14568c; border-radius: 2px; z-index: -1; }
.tile { font-weight: 700; z-index: 0; }
.orange { font-size: 10px; }
.orange::before { background: #ff8c1a; inset: 8px 12px; border-radius: 0; }
.tray { margin-left: auto; display: flex; align-items: center; gap: 8px; }
.tray > svg { width: 16px; height: 16px; }
.tray p { text-align: center; line-height: 18px; width: 60px; margin: 0 3px 0 -4px; }
.notes { position: relative; width: 26px; height: 26px; }
.notes svg { width: 18px; height: 18px; margin: 3px 0; }
.notes b { position: absolute; right: 0; bottom: -2px; width: 17px; height: 17px; border-radius: 50%; background: #444; border: 1px solid #999; font-size: 10px; line-height: 15px; font-weight: 600; }
.peek { width: 7px; height: 40px; border-left: 1px solid #555; }
```
